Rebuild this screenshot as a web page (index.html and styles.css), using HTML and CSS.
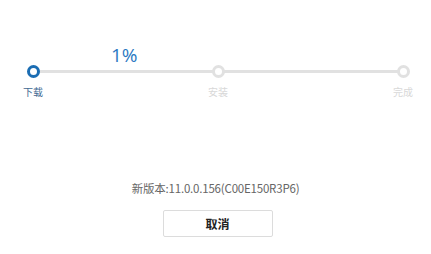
FILE: index.html
```html
<!DOCTYPE html>
<html>
<head>
<meta charset="utf-8">
<link rel="stylesheet" href="styles.css">
</head>
<body>
<div class="page">
  <div class="progress">
    <div class="percent">1%</div>
    <div class="track">
      <div class="line"></div>
      <div class="step step-active">
        <span class="dot"></span>
        <span class="label">下载</span>
      </div>
      <div class="step">
        <span class="dot"></span>
        <span class="label">安装</span>
      </div>
      <div class="step">
        <span class="dot"></span>
        <span class="label">完成</span>
      </div>
    </div>
  </div>
  <div class="version">新版本:11.0.0.156(C00E150R3P6)</div>
  <div class="actions"><button class="cancel">取消</button></div>
</div>
</body>
</html>
```
FILE: styles.css
```css
html, body {
  margin: 0;
  padding: 0;
  background: #fff;
}
body {
  width: 431px;
  height: 254px;
  overflow: hidden;
  font-family: "Noto Sans CJK SC", "Liberation Sans", sans-serif;
}
.page {
  display: flex;
  flex-direction: column;
}
.progress {
  position: relative;
  padding: 46px 0 0 0;
  height: 60px;
}
.percent {
  position: absolute;
  left: 111px;
  top: 44px;
  font-family: "Open Sans", "Liberation Sans", sans-serif;
  font-size: 19px;
  color: #2a78c2;
  line-height: 22px;
}
.track {
  position: relative;
  margin-top: 20px;
  margin-left: 33px;
  width: 370px;
  height: 10px;
  display: flex;
  justify-content: space-between;
}
.line {
  position: absolute;
  left: 0;
  right: 0;
  top: 4px;
  height: 3px;
  background: #e1e1e1;
}
.step {
  position: relative;
  width: 0;
  display: flex;
  flex-direction: column;
  align-items: center;
}
.dot {
  position: absolute;
  left: -6px;
  top: -1px;
  width: 7px;
  height: 7px;
  border: 3px solid #e1e1e1;
  border-radius: 50%;
  background: #fff;
}
.step-active .dot {
  border-color: #1b6db3;
  background: #fff;
}
.label {
  position: absolute;
  top: 20px;
  left: -11px;
  width: 22px;
  text-align: center;
  white-space: nowrap;
  font-size: 10px;
  line-height: 12px;
  color: #d8d8d8;
}
.step-active .label {
  color: #3f6a92;
}
.version {
  margin-top: 75px;
  text-align: center;
  font-size: 11.5px;
  line-height: 14px;
  color: #666;
  letter-spacing: -0.2px;
}
.actions {
  display: flex;
  justify-content: center;
  margin-top: 15px;
  padding-left: 4px;
}
.cancel {
  width: 110px;
  height: 27px;
  border: 1px solid #dcdcdc;
  border-radius: 2px;
  background: #fff;
  font-family: "Noto Sans CJK SC", sans-serif;
  font-size: 12px;
  font-weight: bold;
  color: #222;
  padding: 0;
}
```
